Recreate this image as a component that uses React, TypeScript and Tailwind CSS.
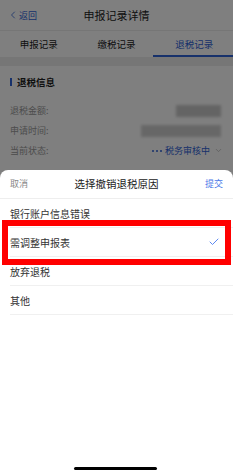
import { Check, ChevronDown, ChevronLeft } from "lucide-react";

const reasons = ["银行账户信息错误", "需调整申报表", "放弃退税", "其他"];

export default function App() {
  return (
    <div
      className="relative w-[233px] h-[476px] overflow-hidden bg-white"
      style={{ fontFamily: '"Noto Sans CJK SC", "Noto Sans", sans-serif' }}
    >
      {/* page underneath */}
      <div className="flex h-[31px] items-center border-b border-[#ececec] relative">
        <div className="absolute left-[7px] flex items-center text-[#2f62d6]">
          <ChevronLeft size={12} strokeWidth={1.6} />
          <span className="text-[9px] leading-none">返回</span>
        </div>
        <div className="w-full text-center text-[11px] text-[#222]">申报记录详情</div>
      </div>
      <div className="grid h-[26px] grid-cols-3 text-[9.5px]">
        <div className="flex items-center justify-center text-[#222]">申报记录</div>
        <div className="flex items-center justify-center text-[#222]">缴税记录</div>
        <div className="relative flex items-center justify-center text-[#2f62d6]">
          退税记录
          <div className="absolute bottom-0 left-[-2px] right-0 h-[2px] bg-[#2f62d6]" />
        </div>
      </div>
      <div className="h-[9px] bg-[#ededed]" />
      <div className="px-[10px]">
        <div className="flex h-[30px] items-center gap-[5px] pt-[2px]">
          <div className="h-[8px] w-[2px] bg-[#2f62d6]" />
          <span className="text-[9.5px] font-bold text-[#222]">退税信息</span>
        </div>
        <div className="mt-[8px] flex flex-col gap-[7px] text-[9px] text-[#9a9a9a]">
          <div className="flex h-[13px] items-center justify-between">
            <span>退税金额:</span>
            <div className="mr-[2px] h-[12px] w-[45px] bg-[#c8c8c8] blur-[1.5px]" />
          </div>
          <div className="flex h-[13px] items-center justify-between">
            <span>申请时间:</span>
            <div className="mr-[2px] h-[12px] w-[80px] bg-[#cfcfcf] blur-[1.5px]" />
          </div>
          <div className="flex h-[13px] items-center justify-between">
            <span>当前状态:</span>
            <div className="flex items-center gap-[3px] text-[#2f62d6]">
              <span className="flex gap-[2px]">
                <span className="h-[2px] w-[2px] rounded-full bg-[#2f62d6]" />
                <span className="h-[2px] w-[2px] rounded-full bg-[#2f62d6]" />
                <span className="h-[2px] w-[2px] rounded-full bg-[#2f62d6]" />
              </span>
              <span>税务审核中</span>
              <ChevronDown size={9} className="ml-[1px] text-[#b5b5b5]" />
            </div>
          </div>
        </div>
      </div>

      {/* dim layer */}
      <div className="absolute inset-0 bg-black/50" />

      {/* bottom sheet */}
      <div className="absolute left-0 right-0 top-[170px] bottom-0 rounded-t-[8px] bg-white">
        <div className="flex h-[29px] items-center justify-between border-b border-[#eeeeee] px-[10px]">
          <span className="w-[30px] text-[9px] text-[#888]">取消</span>
          <span className="text-[10.5px] text-[#222]">选择撤销退税原因</span>
          <span className="w-[30px] text-right text-[9px] text-[#4a78e8]">提交</span>
        </div>
        {reasons.map((r, i) => (
          <div key={r} className="ml-[10px] flex h-[29px] items-center justify-between border-b border-[#f0f0f0] pr-[13px]">
            <span className="pt-[1px] text-[10px] text-[#333]">{r}</span>
            {i === 1 && <Check size={12} strokeWidth={1.8} className="text-[#4a7cf0]" />}
          </div>
        ))}
        <div className="absolute bottom-[6px] left-[74px] h-[3px] w-[83px] rounded-full bg-black" />
      </div>

      {/* highlight annotation */}
      <div className="absolute left-[2px] top-[220px] h-[45px] w-[229px] border-[6px] border-[#ff0000]" />
    </div>
  );
}
